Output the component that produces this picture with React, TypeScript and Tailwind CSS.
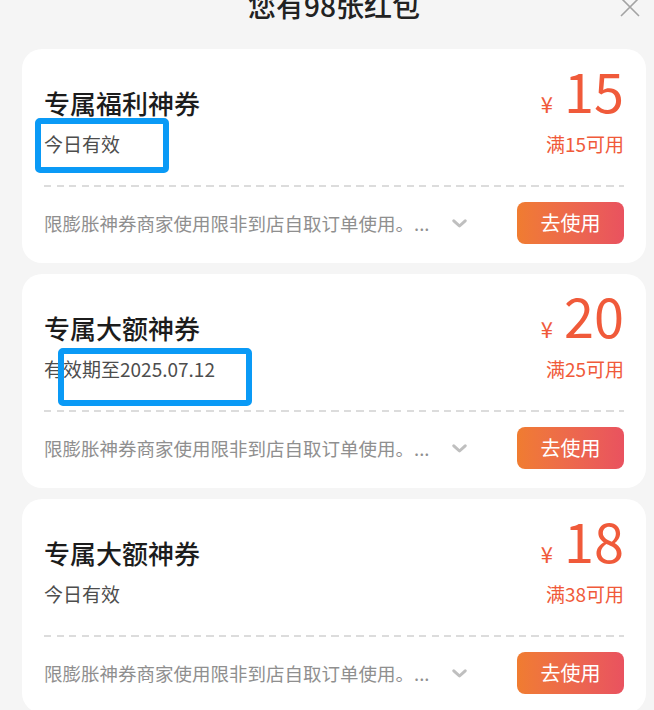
import React from 'react';

type Coupon = {
  title: string;
  validity: string;
  amount: number;
  threshold: number;
  mark?: { left: number; top: number; width: number; height: number };
};

const COUPONS: Coupon[] = [
  { title: '专属福利神券', validity: '今日有效', amount: 15, threshold: 15, mark: { left: 13, top: 69, width: 134, height: 55 } },
  { title: '专属大额神券', validity: '有效期至2025.07.12', amount: 20, threshold: 25, mark: { left: 36, top: 74, width: 194, height: 58 } },
  { title: '专属大额神券', validity: '今日有效', amount: 18, threshold: 38 },
];

const FONT = { fontFamily: '"Noto Sans CJK SC", "Noto Sans", sans-serif' };

function Chevron() {
  return (
    <svg width="15" height="9" viewBox="0 0 15 9" fill="none">
      <path d="M1.8 1.8 L7.5 7 L13.2 1.8" stroke="#bfbfbf" strokeWidth="3" strokeLinecap="round" strokeLinejoin="round" />
    </svg>
  );
}

function CouponCard({ coupon }: { coupon: Coupon }) {
  return (
    <div className="relative bg-white rounded-[20px] px-[22px] pt-[14px] pb-[19px]">
      <div className="flex justify-between items-start">
        <div className="pt-[22px]">
          <div className="text-[26px] leading-[36px] font-medium text-[#1c1c1c]">{coupon.title}</div>
          <div className="mt-[9px] text-[19px] leading-[28px] text-[#4d4d4d]">{coupon.validity}</div>
        </div>
        <div className="flex flex-col items-end text-[#f05a3a]">
          <div className="flex items-baseline leading-none">
            <span className="text-[22px] mr-[11px]">¥</span>
            <span className="text-[54px] leading-[54px]">{coupon.amount}</span>
          </div>
          <div className="mt-[13px] text-[19px] leading-[28px]">满{coupon.threshold}可用</div>
        </div>
      </div>

      <div className="mt-[27px] h-[2px] bg-[repeating-linear-gradient(90deg,#dcdcdc_0_7px,transparent_7px_12.5px)]" />

      <div className="mt-[15px] flex items-center justify-between">
        <div className="flex items-center gap-[23px]">
          <span className="text-[18.5px] leading-[26px] text-[#8f8f8f]">限膨胀神券商家使用限非到店自取订单使用。...</span>
          <Chevron />
        </div>
        <button className="w-[107px] h-[42px] rounded-[8px] bg-linear-to-r from-[#f07c30] to-[#e9525f] text-white text-[20px] leading-none">
          去使用
        </button>
      </div>

      {coupon.mark && (
        <div
          className="absolute border-[6px] border-[#0a9af6] rounded-[5px]"
          style={{ left: coupon.mark.left, top: coupon.mark.top, width: coupon.mark.width, height: coupon.mark.height }}
        />
      )}
    </div>
  );
}

export default function App() {
  return (
    <div className="h-[710px] overflow-hidden bg-[#f5f5f5] pl-[22px] pr-[8px]" style={FONT}>
      <div className="relative -mt-[15px] h-[40px] leading-[40px] text-center text-[28px] font-medium text-[#222]">
        您有98张红包
        <svg className="absolute right-[6px] top-[12px]" width="20" height="20" viewBox="0 0 20 20" fill="none">
          <path d="M1 1 L19 19 M19 1 L1 19" stroke="#a3a3a3" strokeWidth="1.6" />
        </svg>
      </div>
      <div className="mt-[24px] flex flex-col gap-[11px]">
        {COUPONS.map((c, i) => (
          <CouponCard key={i} coupon={c} />
        ))}
      </div>
    </div>
  );
}
